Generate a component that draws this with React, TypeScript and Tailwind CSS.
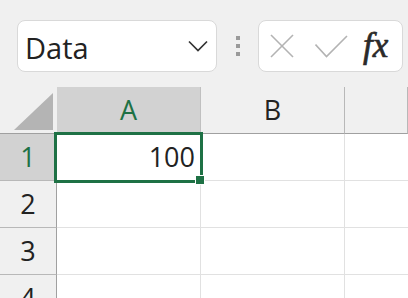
import React from 'react';

const cols = ['A', 'B', ''];
const rows = [1, 2, 3, 4];

const App = () => {
  return (
    <div className="w-[408px] h-[298px] overflow-hidden bg-[#f0f0f0] font-['Open_Sans',sans-serif] text-[#222]">
      {/* top bar */}
      <div className="flex items-start h-[87px] pt-5 pl-[17px]">
        <div className="flex items-center justify-between w-[200px] h-[52px] rounded-[8px] border border-[#d9d9d9] bg-white pl-[7px] pr-[8px]">
          <span className="text-[29px] leading-none text-[#222] mt-[3px]">Data</span>
          <svg width="20" height="12" viewBox="0 0 20 12" fill="none">
            <polyline points="1,1.5 10,10.5 19,1.5" stroke="#333" strokeWidth="1.7" />
          </svg>
        </div>
        <div className="flex flex-col items-center gap-1 w-[41px] pt-4">
          <div className="w-1 h-1 bg-[#9a9a9a]" />
          <div className="w-1 h-1 bg-[#9a9a9a]" />
          <div className="w-1 h-1 bg-[#9a9a9a]" />
        </div>
        <div className="flex items-center w-[145px] h-[52px] rounded-[8px] border border-[#d9d9d9] bg-white pl-[11px]">
          <svg width="24" height="24" viewBox="0 0 24 24" fill="none">
            <line x1="1" y1="1" x2="23" y2="23" stroke="#b3b3b3" strokeWidth="1.6" />
            <line x1="23" y1="1" x2="1" y2="23" stroke="#b3b3b3" strokeWidth="1.6" />
          </svg>
          <svg width="33" height="23" viewBox="0 0 33 23" fill="none" className="ml-[21px]">
            <polyline points="0.5,9.5 11.5,21.5 32,1" stroke="#b3b3b3" strokeWidth="1.6" />
          </svg>
          <span className="ml-[15px] font-['Liberation_Serif',serif] italic text-[35px] leading-none text-[#2a2a2a] [-webkit-text-stroke:0.7px_#2a2a2a] -mt-[2px]">
            fx
          </span>
        </div>
      </div>

      {/* grid */}
      <div className="relative">
        <div className="grid grid-cols-[57px_144px_144px_1fr]">
          {/* header row */}
          <div className="h-[47px] border-b border-[#a0a0a0] flex items-end justify-end pr-[4px] pb-[3px]">
            <svg width="39" height="37" viewBox="0 0 39 37">
              <polygon points="0,37 39,0 39,37" fill="#b4b4b4" />
            </svg>
          </div>
          {cols.map((c, i) => (
            <div
              key={i}
              className={
                i === 0
                  ? 'h-[47px] border-b border-r border-b-[#a0a0a0] border-r-[#c0c0c0] bg-[#d2d2d2] text-[#1e7145] flex items-center justify-center text-[27px]'
                  : 'h-[47px] border-b border-r border-b-[#a0a0a0] border-r-[#b8b8b8] flex items-center justify-center text-[27px]'
              }
            >
              {c}
            </div>
          ))}

          {rows.map((r) => (
            <React.Fragment key={r}>
              <div
                className={
                  r === 1
                    ? 'h-[47px] border-r border-b border-r-[#a0a0a0] border-b-[#b8b8b8] bg-[#d2d2d2] text-[#1e7145] flex items-center justify-center text-[27px]'
                    : 'h-[47px] border-r border-b border-r-[#a0a0a0] border-b-[#b8b8b8] flex items-center justify-center text-[27px]'
                }
              >
                {r}
              </div>
              <div className="h-[47px] bg-white border-r border-b border-[#e1e1e1] flex items-center justify-end pr-[5px] text-[27px]">
                {r === 1 ? '100' : ''}
              </div>
              <div className="h-[47px] bg-white border-r border-b border-[#e1e1e1]" />
              <div className="h-[47px] bg-white border-b border-[#e1e1e1]" />
            </React.Fragment>
          ))}
        </div>

        {/* selection of A1 */}
        <div className="absolute left-[54px] top-[45px] w-[149px] h-[51px] border-[3px] border-[#1e7145]" />
        <div className="absolute left-[195px] top-[88px] w-[10px] h-[10px] border border-white bg-[#1e7145]" />
      </div>
    </div>
  );
};

export default App;
